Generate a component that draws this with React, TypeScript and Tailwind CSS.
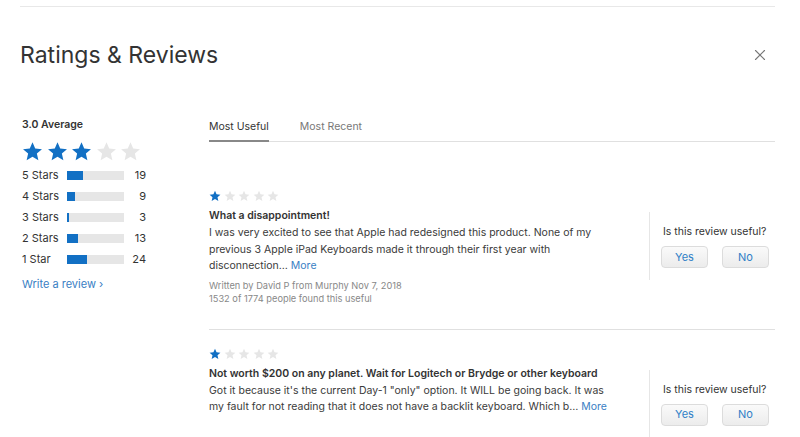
import { X } from "lucide-react";

const font = { fontFamily: "Inter, 'Liberation Sans', sans-serif" };

function Star({ size, on }: { size: number; on: boolean }) {
  return (
    <svg width={size} height={size} viewBox="0 0 24 24">
      <path
        d="M12 1.5l3.1 7.1 7.7.7-5.8 5.1 1.7 7.6L12 18l-6.7 4 1.7-7.6-5.8-5.1 7.7-.7z"
        fill={on ? "#1270c4" : "#e6e6e6"}
      />
    </svg>
  );
}

function Stars({ count, size, gap }: { count: number; size: number; gap: string }) {
  return (
    <div className={`flex ${gap}`}>
      {[0, 1, 2, 3, 4].map((i) => (
        <Star key={i} size={size} on={i < count} />
      ))}
    </div>
  );
}

const histogram = [
  { label: "5 Stars", fill: 16, count: 19 },
  { label: "4 Stars", fill: 8, count: 9 },
  { label: "3 Stars", fill: 2, count: 3 },
  { label: "2 Stars", fill: 11, count: 13 },
  { label: "1 Star", fill: 20, count: 24 },
];

function Vote() {
  return (
    <div className="w-[126px] shrink-0 border-l border-[#e6e6e6] pl-[11px] pt-[12px] pb-[12px] mt-[22px]">
      <div className="pl-[2px] text-[10.5px] leading-[16px] text-[#333]">Is this review useful?</div>
      <div className="mt-[6px] flex gap-[14px]">
        <button className="h-[22px] w-[47px] rounded-[4px] border border-[#dcdcdc] bg-gradient-to-b from-[#fafafa] to-[#ececec] text-[11px] text-[#2f7fc7]">
          Yes
        </button>
        <button className="h-[22px] w-[47px] rounded-[4px] border border-[#dcdcdc] bg-gradient-to-b from-[#fafafa] to-[#ececec] text-[11px] text-[#2f7fc7]">
          No
        </button>
      </div>
    </div>
  );
}

export default function App() {
  return (
    <div className="h-[437px] w-[800px] overflow-hidden bg-white pl-[20px] pr-[25px]" style={font}>
      <div className="pt-[6px]">
        <div className="h-px bg-[#e8e8e8]" />
      </div>

      <div className="mt-[33px] flex items-center justify-between pr-[6px]">
        <h1 className="text-[23px] leading-[30px] text-[#333]">Ratings &amp; Reviews</h1>
        <X size={18} strokeWidth={1.5} className="text-[#777]" />
      </div>

      <div className="mt-[49px] flex">
        <div className="w-[189px] shrink-0 pl-[2px]">
          <div className="mt-[-1px] text-[10.5px] font-semibold leading-[14px] text-[#333]">3.0 Average</div>
          <div className="mt-[9px]">
            <Stars count={3} size={21} gap="gap-[3.5px]" />
          </div>
          <div className="mt-[3px]">
            {histogram.map((row) => (
              <div key={row.label} className="flex h-[21px] items-center text-[11px] text-[#333]">
                <span className="w-[45px]">{row.label}</span>
                <div className="h-[9px] w-[57px] bg-[#e6e6e6]">
                  <div className="h-full bg-[#1270c4]" style={{ width: row.fill }} />
                </div>
                <span className="w-[22px] text-right">{row.count}</span>
              </div>
            ))}
          </div>
          <div className="mt-[6px] text-[11px] leading-[16px] text-[#3a80c4]">Write a review ›</div>
        </div>

        <div className="flex-1">
          <div className="flex border-b border-[#e0e0e0] text-[10.5px] leading-[16px]">
            <div className="border-b-2 border-[#888] pb-[5px] text-[#333] mb-[-1px]">Most Useful</div>
            <div className="ml-[31px] text-[#777]">Most Recent</div>
          </div>

          <div className="pt-[28px]">
            <div className="flex pt-[20px] pb-[24px] border-b border-[#e0e0e0]">
              <div className="flex-1">
                <Stars count={1} size={12} gap="gap-[2.5px]" />
                <div className="mt-[6px] text-[10.5px] font-semibold leading-[16px] text-[#333]">What a disappointment!</div>
                <p className="pt-[1px] text-[10.5px] leading-[16.5px] text-[#3a3a3a]">
                  I was very excited to see that Apple had redesigned this product. None of my
                  <br />
                  previous 3 Apple iPad Keyboards made it through their first year with
                  <br />
                  disconnection… <span className="text-[#3a80c4]">More</span>
                </p>
                <div className="mt-[4px] text-[9.25px] leading-[13px] text-[#888]">
                  <div>Written by David P from Murphy Nov 7, 2018</div>
                  <div>1532 of 1774 people found this useful</div>
                </div>
              </div>
              <div className="self-start">
                <Vote />
              </div>
            </div>

            <div className="flex pt-[18px]">
              <div className="flex-1">
                <Stars count={1} size={12} gap="gap-[2.5px]" />
                <div className="mt-[6px] text-[10.5px] font-semibold leading-[16px] text-[#333]">
                  Not worth $200 on any planet. Wait for Logitech or Brydge or other keyboard
                </div>
                <p className="pt-[1px] text-[10.5px] leading-[16.5px] text-[#3a3a3a]">
                  Got it because it's the current Day-1 "only" option. It WILL be going back. It was
                  <br />
                  my fault for not reading that it does not have a backlit keyboard. Which b… <span className="text-[#3a80c4]">More</span>
                </p>
              </div>
              <div className="self-start">
                <Vote />
              </div>
            </div>
          </div>
        </div>
      </div>
    </div>
  );
}
